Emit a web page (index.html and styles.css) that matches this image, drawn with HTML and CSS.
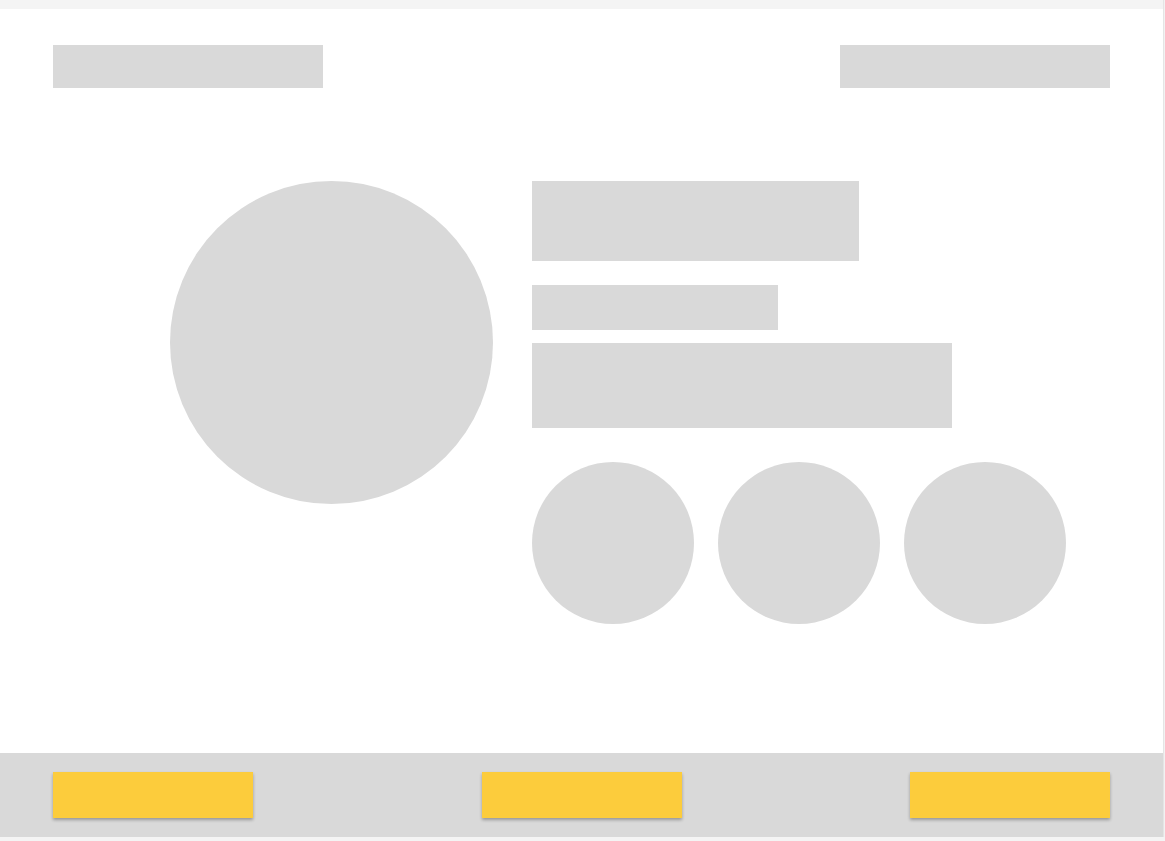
FILE: index.html
```html
<!DOCTYPE html>
<html>
  <head>
    <title>Profile</title>
    <link rel="stylesheet" href="styles.css">
  </head>
  <body>
    <div class="page">
      <div class="main">
        <div class="header">
          <div class="block logo"></div>
          <div class="block nav"></div>
        </div>
        <div class="content">
          <div class="avatar"></div>
          <div class="details">
            <div class="block title"></div>
            <div class="block subtitle"></div>
            <div class="block text"></div>
            <div class="thumbs">
              <div class="thumb"></div>
              <div class="thumb"></div>
              <div class="thumb"></div>
            </div>
          </div>
        </div>
      </div>
      <div class="footer">
        <div class="button"></div>
        <div class="button"></div>
        <div class="button"></div>
      </div>
    </div>
  </body>
</html>
```

FILE: styles.css
```css
body {
  margin: 0;
  background-color: #f4f4f4;
  font-family: "Liberation Sans", Arial, sans-serif;
}

.page {
  width: 1163px;
  padding-top: 9px;
  box-shadow: 1px 0 1px rgba(0, 0, 0, 0.06);
}

.main {
  height: 744px;
  background-color: #ffffff;
  box-sizing: border-box;
  padding: 36px 53px 0 53px;
}

.block {
  background-color: #d9d9d9;
}

.header {
  display: flex;
  justify-content: space-between;
}

.logo,
.nav {
  width: 270px;
  height: 43px;
}

.content {
  display: flex;
  margin-top: 93px;
  padding-left: 117px;
  gap: 39px;
}

.avatar {
  width: 323px;
  height: 323px;
  border-radius: 50%;
  background-color: #d9d9d9;
}

.details {
  display: flex;
  flex-direction: column;
  align-items: flex-start;
}

.title {
  width: 327px;
  height: 80px;
}

.subtitle {
  width: 246px;
  height: 45px;
  margin-top: 24px;
}

.text {
  width: 420px;
  height: 85px;
  margin-top: 13px;
}

.thumbs {
  display: flex;
  gap: 24px;
  margin-top: 34px;
}

.thumb {
  width: 162px;
  height: 162px;
  border-radius: 50%;
  background-color: #d9d9d9;
}

.footer {
  height: 84px;
  background-color: #d9d9d9;
  display: flex;
  justify-content: space-between;
  align-items: flex-start;
  padding: 19px 53px 0 53px;
  box-sizing: border-box;
}

.button {
  width: 200px;
  height: 46px;
  background-color: #fccc3c;
  box-shadow: 0 2px 3px rgba(0, 0, 0, 0.3);
}
```
